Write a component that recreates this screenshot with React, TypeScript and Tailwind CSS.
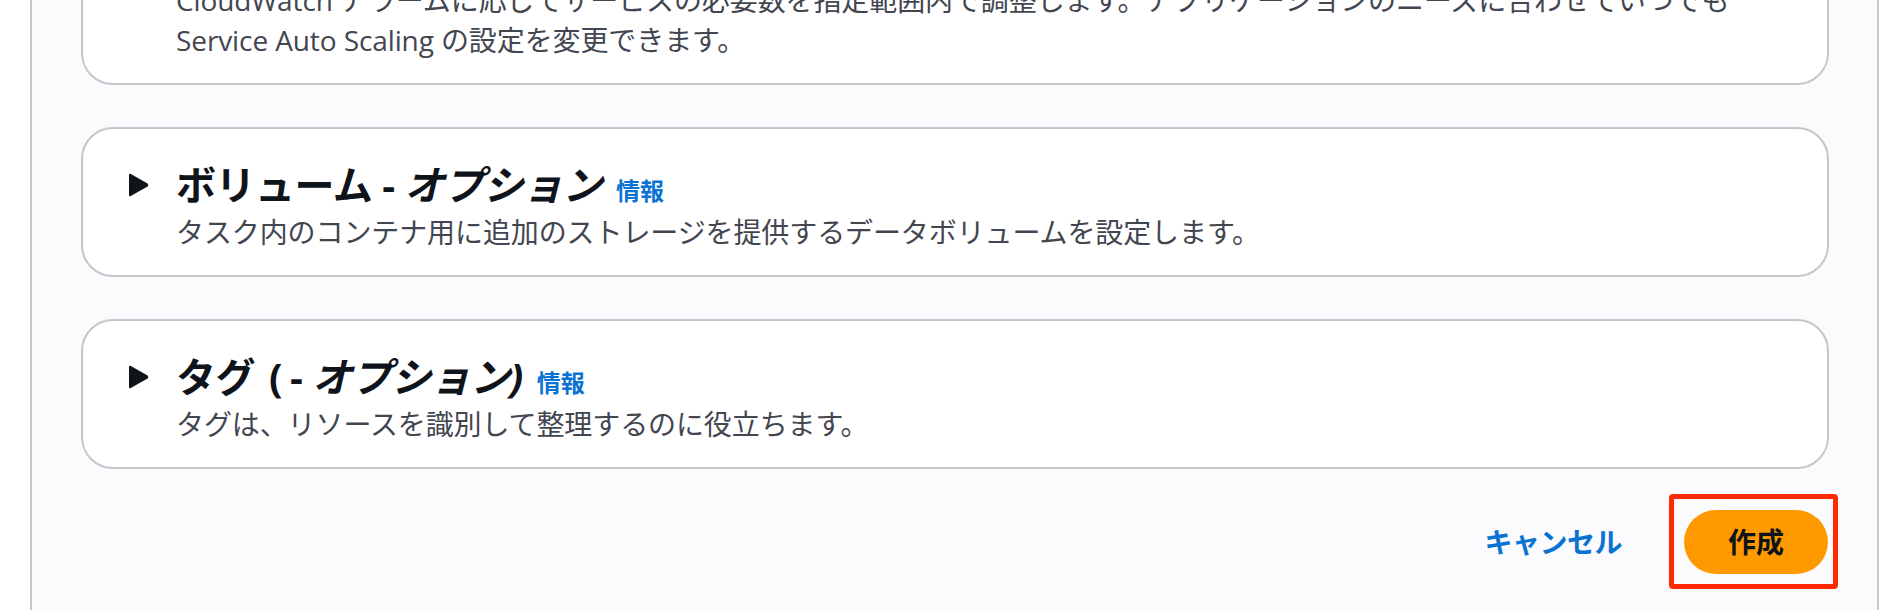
import React from 'react';

const font = { fontFamily: '"Open Sans", "Noto Sans CJK JP", sans-serif' };

function Caret() {
  return (
    <svg width="21" height="24" viewBox="0 0 21 24" className="shrink-0">
      <path d="M1 2 Q1 0 2.8 1 L19.6 10.6 Q21 12 19.6 13.4 L2.8 23 Q1 24 1 22 Z" fill="#0f141a" />
    </svg>
  );
}

interface SectionProps {
  title: React.ReactNode;
  description: string;
}

function Section({ title, description }: SectionProps) {
  return (
    <div className="rounded-[32px] border-2 border-[#c6c6cd] bg-white pl-[45px] pr-[40px] pt-[32px] pb-[23px]">
      <div className="flex items-center gap-[27px]">
        <Caret />
        <h2 className="text-[40px] leading-[48px] font-bold text-[#0f141a] tracking-[-0.5px]">
          {title}
          <span className="ml-[14px] text-[24px] leading-none font-bold text-[#0972d3] tracking-normal">情報</span>
        </h2>
      </div>
      <p className="ml-[48px] mt-[3px] text-[28px] leading-[40px] text-[#424650] tracking-[-0.1px]">{description}</p>
    </div>
  );
}

export default function App() {
  return (
    <div className="w-[1902px] h-[610px] bg-white overflow-hidden flex" style={font}>
      <div className="ml-[30px] w-[1849px] h-full border-x-2 border-[#c6c6cd] bg-[#fbfbfd] pl-[49px] pr-[48px] flex flex-col">
        <div className="flex flex-col gap-[42px]">
          {/* Service Auto Scaling (scrolled off the top) */}
          <div className="-mt-[54px] rounded-[32px] border-2 border-[#c6c6cd] bg-white pl-[93px] pr-[40px] pt-[32px] pb-[23px]">
            <p className="text-[28px] leading-[40px] text-[#424650] tracking-[-0.1px] whitespace-nowrap">
              CloudWatch アラームに応じてサービスの必要数を指定範囲内で調整します。アプリケーションのニーズに合わせていつでも
              <br />
              Service Auto Scaling の設定を変更できます。
            </p>
          </div>

          <Section
            title={<>ボリューム - <i>オプション</i></>}
            description="タスク内のコンテナ用に追加のストレージを提供するデータボリュームを設定します。"
          />

          <Section
            title={<>タグ <span className="ml-[4px] mr-[8px]">(</span>- <i>オプション)</i></>}
            description="タグは、リソースを識別して整理するのに役立ちます。"
          />
        </div>

        {/* Actions */}
        <div className="mt-[25px] flex items-center justify-end">
          <button className="mr-[47px] text-[28px] font-bold text-[#0972d3] tracking-[-0.5px]">キャンセル</button>
          <div className="-mr-[9px] rounded-[4px] border-[5px] border-[#ff2a00] pl-[10px] pr-[5px] pt-[11px] pb-[10px]">
            <button className="w-[144px] h-[64px] rounded-full bg-[#ff9900] text-[28px] font-bold text-[#0f141a]">
              作成
            </button>
          </div>
        </div>
      </div>
    </div>
  );
}
